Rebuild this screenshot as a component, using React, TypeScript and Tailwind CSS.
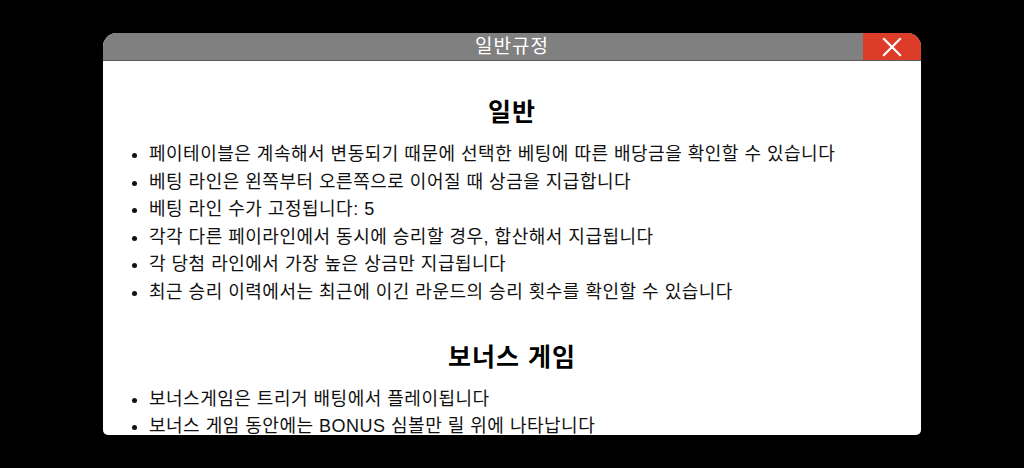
import React from 'react';

const general = [
  '페이테이블은 계속해서 변동되기 때문에 선택한 베팅에 따른 배당금을 확인할 수 있습니다',
  '베팅 라인은 왼쪽부터 오른쪽으로 이어질 때 상금을 지급합니다',
  '베팅 라인 수가 고정됩니다: 5',
  '각각 다른 페이라인에서 동시에 승리할 경우, 합산해서 지급됩니다',
  '각 당첨 라인에서 가장 높은 상금만 지급됩니다',
  '최근 승리 이력에서는 최근에 이긴 라운드의 승리 횟수를 확인할 수 있습니다',
];

const bonus = [
  '보너스게임은 트리거 배팅에서 플레이됩니다',
  '보너스 게임 동안에는 BONUS 심볼만 릴 위에 나타납니다',
];

function Section({ title, items }: { title: string; items: string[] }) {
  return (
    <section>
      <h2 className="text-center text-[25px] font-bold leading-[30px] tracking-[1px] text-black">{title}</h2>
      <ul className="mt-[14px] list-disc pl-[46px] text-[18px] leading-[27.6px] tracking-[0.5px] text-[#111]">
        {items.map((t) => (
          <li key={t}>{t}</li>
        ))}
      </ul>
    </section>
  );
}

export default function App() {
  return (
    <div
      className="h-[468px] w-[1024px] overflow-hidden bg-black pl-[103px] pt-[33px]"
      style={{ fontFamily: '"Liberation Sans", "Noto Sans CJK KR", sans-serif' }}
    >
      <div className="flex h-[402px] w-[818px] flex-col overflow-hidden rounded-b-[5px] rounded-t-[14px] bg-white">
        <header className="relative flex h-[28px] shrink-0 items-center justify-center border-b border-[#5a5a5a] bg-[#808080]">
          <span className="text-[19px] leading-none tracking-[1px] text-white">일반규정</span>
          <button className="absolute right-0 top-0 flex h-full w-[58px] items-center justify-center bg-[#dc3c28]">
            <svg width="20" height="20" viewBox="0 0 20 20" fill="none" stroke="#fff" strokeWidth="2.2" strokeLinecap="square">
              <path d="M2 2 L18 18 M18 2 L2 18" />
            </svg>
          </button>
        </header>
        <div className="flex-1 overflow-hidden pt-[36px]">
          <Section title="일반" items={general} />
          <div className="mt-[35px]">
            <Section title="보너스 게임" items={bonus} />
          </div>
        </div>
      </div>
    </div>
  );
}
